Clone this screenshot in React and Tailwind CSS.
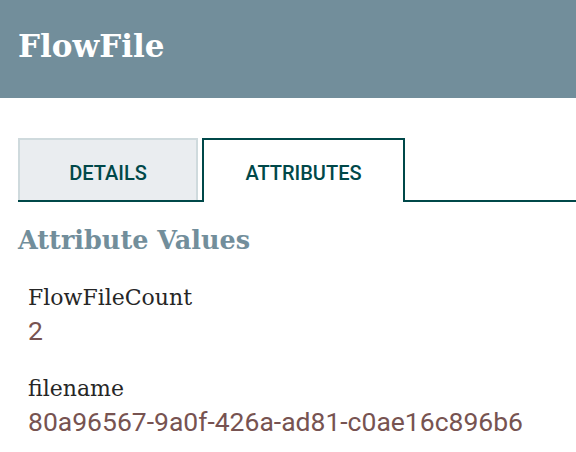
export default function App() {
  const slab = { fontFamily: '"DejaVu Serif", "Liberation Serif", serif' };
  return (
    <div className="w-[576px] h-[452px] bg-white overflow-hidden">
      <div className="h-[98px] bg-[#728e9b] pl-[18px] pt-[28px]">
        <div className="text-[31px] leading-[36px] font-bold text-white" style={slab}>
          FlowFile
        </div>
      </div>
      <div className="pt-[40px]">
        <div className="flex items-end ml-[18px] border-b-2 border-[#004849]">
          <div className="w-[180px] h-[62px] mr-[4px] pt-[5px] bg-[#eaedf0] border-2 border-b-0 border-[#cfdadd] flex items-center justify-center text-[#004849] text-[20px] font-medium font-['Roboto',sans-serif]">
            DETAILS
          </div>
          <div className="w-[203px] h-[64px] -mb-[2px] pt-[3px] bg-white border-2 border-b-0 border-[#004849] flex items-center justify-center text-[#004849] text-[20px] font-medium font-['Roboto',sans-serif]">
            ATTRIBUTES
          </div>
        </div>
      </div>
      <div className="pl-[18px] pt-[22px]">
        <div className="text-[25.5px] leading-[32px] font-bold text-[#728e9b]" style={slab}>
          Attribute Values
        </div>
        <div className="pl-[10px] pt-[27px]">
          <div className="text-[22px] leading-[30px] text-[#262626]" style={slab}>FlowFileCount</div>
          <div className="text-[26.5px] leading-[36px] text-[#775351] font-['Roboto',sans-serif]">2</div>
          <div className="text-[22px] leading-[30px] text-[#262626] mt-[25px]" style={slab}>filename</div>
          <div className="text-[26.5px] leading-[36px] text-[#775351] font-['Roboto',sans-serif]">80a96567-9a0f-426a-ad81-c0ae16c896b6</div>
        </div>
      </div>
    </div>
  );
}
